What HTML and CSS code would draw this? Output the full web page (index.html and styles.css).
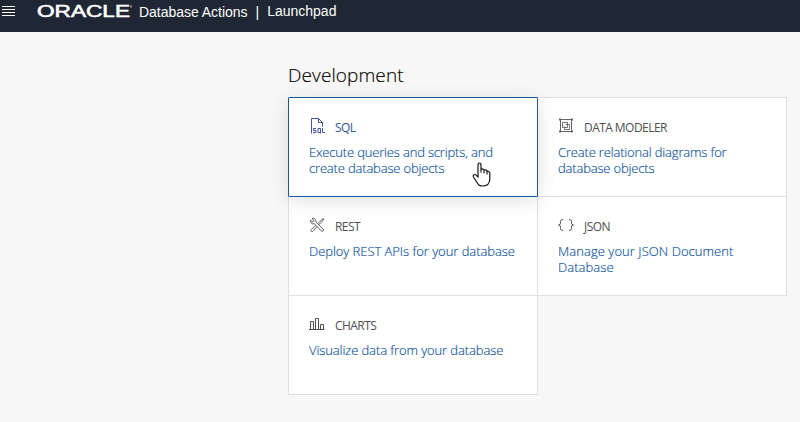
FILE: index.html
```html
<!DOCTYPE html>
<html lang="en">
<head>
<meta charset="utf-8">
<title>Database Actions | Launchpad</title>
<link rel="stylesheet" href="styles.css">
</head>
<body>
<header class="topbar">
  <svg class="menu" width="13" height="12" viewBox="0 0 13 12"><path d="M0 1.500h13M0 4.500h13M0 7.500h13M0 10.500h13" stroke="#fff"/></svg>
  <svg class="logo" width="96" height="20" viewBox="0 0 96 20"><text class="word" x="0" y="16" textLength="93" lengthAdjust="spacingAndGlyphs">ORACLE</text><circle cx="94" cy="5.500" r="1" fill="#a9afb6"/></svg>
  <span class="product">Database Actions</span>
  <span class="divider">|</span>
  <span class="page">Launchpad</span>
</header>
<main class="content">
  <h1 class="heading">Development</h1>
  <div class="cards">
    <a class="card active">
      <div class="title"><svg class="icon" width="16" height="16" viewBox="0 0 16 16" fill="none" stroke="#44549f"><path d="M2.500 15.500V.5h7l4 4v4M9.500.5v4h4"/><path d="M7 10.500H4.500v2H7v2H4M11.500 14.500h-2.500v-4h2.500v5M13.500 10v4.500H16"/></svg><span>SQL</span></div>
      <p class="snug">Execute queries and scripts, and<br>create database objects</p>
      <svg class="cursor" width="20" height="25" viewBox="0 0 20 25"><path d="M6 14V3.200Q6 1 7.500 1T9 3.200V10V7.500q1.500-1.200 3 .3V11V8.300q1.500-1 3 .4V12V9.500q1.800-.7 2.800 1V17q0 3-2 5.500Q14 24 10.500 24T6 22L1.500 15Q.7 13.300 2 12.700T4.300 13.300L6 15Z" fill="#fff" stroke="#16161f" stroke-width="1.200" stroke-linejoin="round"/></svg>
    </a>
    <a class="card">
      <div class="title"><svg class="icon" width="16" height="16" viewBox="0 0 16 16" fill="none" stroke="#666"><path d="M2.500 1.500h11v12h-11z"/><path d="M4.500 4.500h5v5h-5zM7.500 6.500h4v5h-5v-3" stroke-width=".9"/><path d="M1 .5h2v2H1zM13 .5h2v2h-2zM1 12.500h2v2H1zM13 12.500h2v2h-2z" fill="#666" stroke="none"/></svg><span>DATA MODELER</span></div>
      <p class="snug">Create relational diagrams for<br>database objects</p>
    </a>
    <a class="card">
      <div class="title"><svg class="icon" width="16" height="16" viewBox="0 0 16 16" fill="none" stroke="#666"><path transform="translate(.5 .5)" d="M2.500 1.200 4.700 3.300 3.500 4.700 1.200 2.700Q.3 4.500 1.800 5.700T4.700 6l7 7.400q1 .8 1.900 0t0-1.900L6.400 4.500Q6.800 2.500 5.400 1.300T2.500 1.200ZM14.200 1.200 12 2.200 8 6.400M9 7.400l4.300-4 .9-2.200M6.300 8 1.600 12.200q-.8 1 0 1.700t1.700 0L7.700 9.300"/></svg><span>REST</span></div>
      <p class="rest">Deploy REST APIs for your database</p>
    </a>
    <a class="card">
      <div class="title"><svg class="icon" width="16" height="16" viewBox="0 0 16 16" fill="none" stroke="#555"><path d="M5 2.500Q2.500 2.500 2.500 4.500V6Q2.500 8 .5 8q2 0 2 2v1.500q0 2 2.500 2M11 2.500q2.500 0 2.500 2V6q0 2 2 2-2 0-2 2v1.500q0 2-2.500 2"/></svg><span>JSON</span></div>
      <p class="json">Manage your JSON Document<br>Database</p>
    </a>
    <a class="card">
      <div class="title"><svg class="icon" width="16" height="16" viewBox="0 0 16 16" fill="none" stroke="#505050"><path d="M0 13.500h15.500M1.500 13.500v-8h3v8M6.500 13.500V2.500h3v11M11.500 13.500v-5h3v5"/></svg><span>CHARTS</span></div>
      <p class="charts">Visualize data from your database</p>
    </a>
  </div>
</main>
</body>
</html>
```
FILE: styles.css
```css
* { box-sizing: border-box; }
body { margin: 0; height: 422px; overflow: hidden; background: #f7f7f7; font-family: "Open Sans", sans-serif; }
.topbar { height: 32px; background: #1e2733; color: #fff; display: flex; align-items: flex-start; font: 14px/16px "Liberation Sans", sans-serif; white-space: nowrap; }
.menu { margin: 5px 0 0 2px; }
.logo { margin: 1px 0 0 22px; }
.word { font: 17px "Liberation Sans", sans-serif; fill: #fff; stroke: #fff; stroke-width: .6px; }
.product { margin: 4px 0 0 6px; letter-spacing: -.03px; }
.divider { margin: 4px 0 0 8px; }
.page { margin: 3px 0 0 8px; }
.content { margin-left: 288px; padding-top: 30px; }
.heading { margin: 0; height: 35px; font-size: 19px; line-height: 27px; font-weight: 300; letter-spacing: .1px; color: #000; -webkit-text-stroke: .15px; }
.cards { display: grid; grid-template-columns: 249px 249px; grid-auto-rows: 99px; }
.card { position: relative; width: 250px; height: 100px; border: 1px solid #dfdfdf; background: #fff; padding: 20px; }
.active { z-index: 1; border-color: #1b5a99; border-radius: 1px; box-shadow: 0 4px 20px rgba(0,0,0,.12); }
.title { display: flex; height: 20px; gap: 10px; font-size: 12px; line-height: 20px; color: #505050; }
.title span { letter-spacing: -.55px; }
.active .title { color: #30589a; }
p { margin: 6px 0 0; font-size: 13px; font-weight: 300; line-height: 16px; color: #08509c; white-space: nowrap; -webkit-text-stroke: .15px; }
.snug { letter-spacing: -.17px; }
.rest { letter-spacing: -.05px; }
.json { letter-spacing: .06px; }
.charts { letter-spacing: -.1px; }
.cursor { position: absolute; left: 183px; top: 64px; }
```
